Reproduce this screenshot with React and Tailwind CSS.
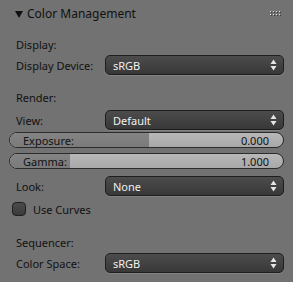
import React from 'react';

const font = { fontFamily: '"Noto Sans", "Open Sans", "DejaVu Sans", sans-serif' };

const Arrows = () => (
  <svg width="7" height="12" viewBox="0 0 7 12" className="shrink-0">
    <polygon points="3.5,0.5 6.5,5 0.5,5" fill="#e6e6e6" />
    <polygon points="0.5,7 6.5,7 3.5,11.5" fill="#e6e6e6" />
  </svg>
);

const Dropdown = ({ value }) => (
  <div className="flex-1 h-[20px] rounded-[5px] border border-[#1e1e1e] bg-gradient-to-b from-[#4c4c4c] to-[#383838] flex items-center pl-[7px] pr-[6px] text-[#f0f0f0] shadow-[0_1px_0_rgba(255,255,255,0.12)]">
    <span className="flex-1">{value}</span>
    <Arrows />
  </div>
);

const Row = ({ label, value, className = '' }) => (
  <div className={`flex items-center pl-[16px] pr-[9px] ${className}`}>
    <span className="w-[89px] text-[#111]">{label}</span>
    <Dropdown value={value} />
  </div>
);

const Slider = ({ label, value, fill, className = '' }) => (
  <div className={`mx-[9px] h-[16px] rounded-[8px] border border-[#2c2c2c] overflow-hidden relative flex items-center pl-[13px] pr-[14px] text-[#111] bg-gradient-to-b from-[#b8b8b8] to-[#a8a8a8] ${className}`}>
    <div className="absolute left-0 top-0 bottom-0 bg-gradient-to-b from-[#848484] to-[#7a7a7a]" style={{ width: fill }} />
    <span className="relative flex-1">{label}</span>
    <span className="relative">{value}</span>
  </div>
);

const Grip = () => (
  <svg width="11" height="6" viewBox="0 0 11 6">
    {[0, 3, 6, 9].map((x) =>
      [0, 3].map((y) => (
        <g key={`${x}-${y}`}>
          <rect x={x} y={y} width="1" height="1" fill="#e0e0e0" />
          <rect x={x + 1} y={y + 1} width="1" height="1" fill="#3a3a3a" />
        </g>
      ))
    )}
  </svg>
);

export default function App() {
  return (
    <div className="w-[293px] h-[282px] bg-[#727272] text-[11px] leading-none flex flex-col" style={font}>
      {/* Header */}
      <div className="h-[28px] flex items-center pl-[15px] pr-[12px]">
        <svg width="8" height="8" viewBox="0 0 8 8" className="mr-[4px]">
          <polygon points="0,1 8,1 4,8" fill="#111" />
        </svg>
        <span className="flex-1 text-[12px] text-[#111]">Color Management</span>
        <Grip />
      </div>

      {/* Display */}
      <div className="h-[20px] mt-[6px] flex items-center pl-[16px] text-[#111]">Display:</div>
      <Row label="Display Device:" value="sRGB" className="mt-[1px]" />

      {/* Render */}
      <div className="h-[20px] mt-[12px] flex items-center pl-[16px] text-[#111]">Render:</div>
      <Row label="View:" value="Default" className="mt-[3px]" />
      <Slider label="Exposure:" value="0.000" fill="51%" className="mt-[2px]" />
      <Slider label="Gamma:" value="1.000" fill="22%" className="mt-[5px]" />
      <Row label="Look:" value="None" className="mt-[7px]" />

      {/* Use Curves */}
      <div className="flex items-center pl-[12px] mt-[6px] h-[14px]">
        <div className="w-[14px] h-[14px] rounded-[4px] border border-[#1e1e1e] bg-gradient-to-b from-[#4c4c4c] to-[#3a3a3a]" />
        <span className="ml-[7px] text-[#111]">Use Curves</span>
      </div>

      {/* Sequencer */}
      <div className="h-[20px] mt-[16px] flex items-center pl-[16px] text-[#111]">Sequencer:</div>
      <Row label="Color Space:" value="sRGB" className="mt-[1px]" />
    </div>
  );
}
